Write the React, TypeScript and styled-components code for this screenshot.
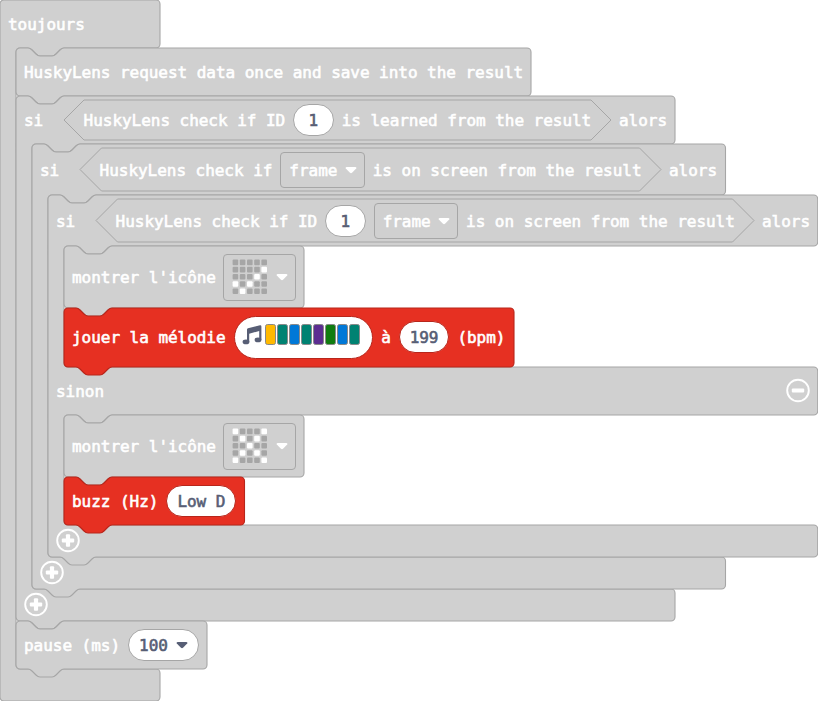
import React from "react";
import styled, { createGlobalStyle } from "styled-components";

const GREY = { fill: "#d0d0d0", line: "#a6a6a6" };
const RED = { fill: "#e63022", line: "#b8261b" };
const INK = "#575e75";

const GlobalStyle = createGlobalStyle`
  body { margin: 0; background: #fff; overflow: hidden; }
  * { box-sizing: border-box; }
`;

const Workspace = styled.main`
  width: 818px;
  height: 701px;
  overflow: hidden;
  font: 16px/20px "DejaVu Sans Mono", monospace;
  letter-spacing: -0.035px;
  color: #fff;
`;

const BlockBox = styled.section<{ $w: number }>`
  position: relative;
  width: ${(p) => p.$w}px;
`;

const Outline = styled.svg`
  position: absolute;
  inset: 0;
  overflow: visible;
  pointer-events: none;
`;

const Row = styled.div<{ $h: number }>`
  position: relative;
  display: flex;
  align-items: center;
  gap: 8px;
  height: ${(p) => p.$h}px;
  padding: 0 8px;
  white-space: pre;
`;

const MelodyRow = styled(Row)`
  padding-bottom: 1px;
`;

const Mouth = styled.div`
  position: relative;
  display: flex;
  flex-direction: column;
  padding-left: 16px;
`;

const Label = styled.span`
  flex: none;
  padding-top: 2.4px;
  -webkit-text-stroke: 0.6px currentColor;
`;

const Keyword = styled(Label)`
  margin-right: 12.8px;
`;

const Condition = styled.div<{ $w: number; $h: number }>`
  position: relative;
  flex: none;
  display: flex;
  align-items: center;
  gap: 8px;
  width: ${(p) => p.$w}px;
  height: ${(p) => p.$h}px;
  padding-left: 19.6px;
  & > span, & > div { position: relative; }
`;

const Pill = styled.div<{ $w: number; $h?: number; $line: string }>`
  flex: none;
  display: flex;
  align-items: center;
  justify-content: center;
  gap: 8px;
  width: ${(p) => p.$w}px;
  height: ${(p) => p.$h ?? 32}px;
  border: 1px solid ${(p) => p.$line};
  border-radius: 22px;
  background: #fff;
  color: ${INK};
`;

const Select = styled.div<{ $w: number; $h: number }>`
  flex: none;
  display: flex;
  align-items: center;
  justify-content: space-between;
  width: ${(p) => p.$w}px;
  height: ${(p) => p.$h}px;
  padding: 0 7px 0 8px;
  border: 1px solid ${GREY.line};
  border-radius: 4px;
`;

const IconSelect = styled(Select)`
  margin-left: -0.8px;
`;

const Notes = styled.div`
  display: flex;
  gap: 1px;
`;

const NoteBar = styled.i<{ $c: string }>`
  width: 11px;
  height: 21px;
  border: 1px solid #898989;
  border-radius: 2.5px;
  background: ${(p) => p.$c};
`;

const MelodyContent = styled.div`
  display: flex;
  align-items: center;
  gap: 3px;
  margin: 0 4px 5px 0;
`;

const Spacer = styled.span`
  flex: 1;
`;

const TOP_NOTCH = "c2,0 3,1 4,2 l4,4 c1,1 2,2 4,2 h12 c2,0 3,-1 4,-2 l4,-4 c1,-1 2,-2 4,-2";
const BOTTOM_TAB = "c-2,0 -3,1 -4,2 l-4,4 c-1,1 -2,2 -4,2 h-12 c-2,0 -3,-1 -4,-2 l-4,-4 c-1,-1 -2,-2 -4,-2";

type BlockShape = {
  w: number;
  bars: number[];
  mouths?: number[];
  loop?: boolean;
};

function blockPath({ w, bars, mouths = [], loop }: BlockShape) {
  let y = 0;
  let d = `M0,4 a4,4 0 0 1 4,-4 ${loop ? "" : `H12 ${TOP_NOTCH}`} H${w - 4} a4,4 0 0 1 4,4 `;
  bars.forEach((bar, i) => {
    y += bar;
    d += `V${y - 4} a4,4 0 0 1 -4,4 `;
    if (i < mouths.length) {
      d += `H64 ${BOTTOM_TAB} H20 a4,4 0 0 0 -4,4 `;
      y += mouths[i];
      d += `V${y - 4} a4,4 0 0 0 4,4 H${w - 4} a4,4 0 0 1 4,4 `;
    }
  });
  d += loop ? "H4 " : `H48 ${BOTTOM_TAB} H4 `;
  return d + "a4,4 0 0 1 -4,-4 Z";
}

function Block({
  tone = GREY,
  children,
  ...shape
}: BlockShape & { tone?: typeof GREY; children: React.ReactNode }) {
  return (
    <BlockBox $w={shape.w}>
      <Outline width="1" height="1">
        <path d={blockPath(shape)} fill={tone.fill} stroke={tone.line} strokeWidth="1.1" />
      </Outline>
      {children}
    </BlockBox>
  );
}

function Hexagon({ w, h, children }: { w: number; h: number; children: React.ReactNode }) {
  const t = h / 2;
  return (
    <Condition $w={w} $h={h}>
      <Outline width="1" height="1">
        <path d={`M${t},0 H${w - t} L${w},${t} L${w - t},${h} H${t} L0,${t} Z`} fill={GREY.fill} stroke={GREY.line} />
      </Outline>
      {children}
    </Condition>
  );
}

const Caret = () => (
  <svg width="12" height="8" viewBox="0 0 12 8">
    <path d="M1.6,1 H10.4 Q12,1.2 11.2,2.5 L7,6.8 Q6,7.6 5,6.8 L0.8,2.5 Q0,1.2 1.6,1 Z" fill="currentColor" />
  </svg>
);

function RoundButton({ minus }: { minus?: boolean }) {
  return (
    <svg width="24" height="24" viewBox="0 0.5 24 24" overflow="visible">
      <circle cx="12" cy="12" r="10.8" fill="none" stroke="#fff" strokeWidth="1.9" />
      <rect x="5.8" y="9.9" width="12.4" height="4.2" rx="1" fill="#fff" />
      {!minus && <rect x="9.9" y="5.8" width="4.2" height="12.4" rx="1" fill="#fff" />}
    </svg>
  );
}

const MusicIcon = () => (
  <svg width="20" height="20" viewBox="0 0 20 20" fill={INK}>
    <path d="M5,4.6 Q5,3.6 6,3.2 L18,0.2 Q19.4,0 19.4,1.4 V15 H17.2 V6 L7.2,8.7 V17 H5 Z" />
    <ellipse cx="4" cy="16.9" rx="3.4" ry="2.4" />
    <ellipse cx="16" cy="14.9" rx="3.4" ry="2.4" />
  </svg>
);

const FrameSelect = () => (
  <Select $w={84.4} $h={36}>
    <Label>frame</Label>
    <Caret />
  </Select>
);

const NumberPill = ({ value, w }: { value: string; w: number }) => (
  <Pill $w={w} $line="#a6a6a6">
    <Label>{value}</Label>
  </Pill>
);

const LedMatrix = ({ leds }: { leds: string }) => (
  <svg width="36" height="36" viewBox="0 0 36 36">
    {[...leds].map((c, i) => (
      <rect
        key={i}
        x={0.6 + (i % 5) * 7.2}
        y={0.6 + Math.floor(i / 5) * 7.2}
        width="5.6"
        height="5.6"
        rx="1"
        fill={c === "#" ? "#fff" : "#a6a6a6"}
      />
    ))}
  </svg>
);

function ShowIcon({ leds, h }: { leds: string; h: number }) {
  return (
    <Block w={240} bars={[h]}>
      <Row $h={h}>
        <Label>montrer l'icône</Label>
        <IconSelect $w={73} $h={47}>
          <LedMatrix leds={leds} />
          <Caret />
        </IconSelect>
      </Row>
    </Block>
  );
}

const CHECK = ".........#...#.#.#...#...";
const CROSS = "#...#.#.#...#...#.#.#...#";
const MELODY = ["#ffb900", "#008272", "#0078d7", "#008272", "#5c2d91", "#107c10", "#0078d7", "#008272"];

export default function App() {
  return (
    <Workspace>
      <GlobalStyle />
      <Block loop w={160} bars={[48, 32]} mouths={[621]}>
        <Row $h={48}>
          <Label>toujours</Label>
        </Row>
        <Mouth>
          <Block w={515} bars={[48]}>
            <Row $h={48}>
              <Label>HuskyLens request data once and save into the result</Label>
            </Row>
          </Block>
          <Block w={659} bars={[48, 32]} mouths={[445]}>
            <Row $h={48}>
              <Keyword>si</Keyword>
              <Hexagon w={547} h={40}>
                <Label>HuskyLens check if ID</Label>
                <NumberPill value="1" w={40.5} />
                <Label>is learned from the result</Label>
              </Hexagon>
              <Label>alors</Label>
            </Row>
            <Mouth>
              <Block w={693.5} bars={[51, 32]} mouths={[362]}>
                <Row $h={51}>
                  <Keyword>si</Keyword>
                  <Hexagon w={581} h={43}>
                    <Label>HuskyLens check if</Label>
                    <FrameSelect />
                    <Label>is on screen from the result</Label>
                  </Hexagon>
                  <Label>alors</Label>
                </Row>
                <Mouth>
                  <Block w={769.7} bars={[51, 48, 32]} mouths={[121, 110]}>
                    <Row $h={51}>
                      <Keyword>si</Keyword>
                      <Hexagon w={658} h={43}>
                        <Label>HuskyLens check if ID</Label>
                        <NumberPill value="1" w={40.5} />
                        <FrameSelect />
                        <Label>is on screen from the result</Label>
                      </Hexagon>
                      <Label>alors</Label>
                    </Row>
                    <Mouth>
                      <ShowIcon leds={CHECK} h={62} />
                      <Block tone={RED} w={450} bars={[59]}>
                        <MelodyRow $h={59}>
                          <Label>jouer la mélodie</Label>
                          <Pill $w={139.6} $h={43} $line={RED.line}>
                            <MelodyContent>
                              <MusicIcon />
                              <Notes>
                                {MELODY.map((c, i) => (
                                  <NoteBar key={i} $c={c} />
                                ))}
                              </Notes>
                            </MelodyContent>
                          </Pill>
                          <Label>à</Label>
                          <Pill $w={50.6} $line={RED.line}>
                            <Label>199</Label>
                          </Pill>
                          <Label>(bpm)</Label>
                        </MelodyRow>
                      </Block>
                    </Mouth>
                    <Row $h={48}>
                      <Label>sinon</Label>
                      <Spacer />
                      <RoundButton minus />
                    </Row>
                    <Mouth>
                      <ShowIcon leds={CROSS} h={62} />
                      <Block tone={RED} w={180.5} bars={[48]}>
                        <Row $h={48}>
                          <Label>buzz (Hz)</Label>
                          <Pill $w={70} $line={RED.line}>
                            <Label>Low D</Label>
                          </Pill>
                        </Row>
                      </Block>
                    </Mouth>
                    <Row $h={32}>
                      <RoundButton />
                    </Row>
                  </Block>
                </Mouth>
                <Row $h={32}>
                  <RoundButton />
                </Row>
              </Block>
            </Mouth>
            <Row $h={32}>
              <RoundButton />
            </Row>
          </Block>
          <Block w={191} bars={[48]}>
            <Row $h={48}>
              <Label>pause (ms)</Label>
              <Pill $w={71} $line={GREY.line}>
                <Label>100</Label>
                <Caret />
              </Pill>
            </Row>
          </Block>
        </Mouth>
        <Row $h={32}>{null}</Row>
      </Block>
    </Workspace>
  );
}
